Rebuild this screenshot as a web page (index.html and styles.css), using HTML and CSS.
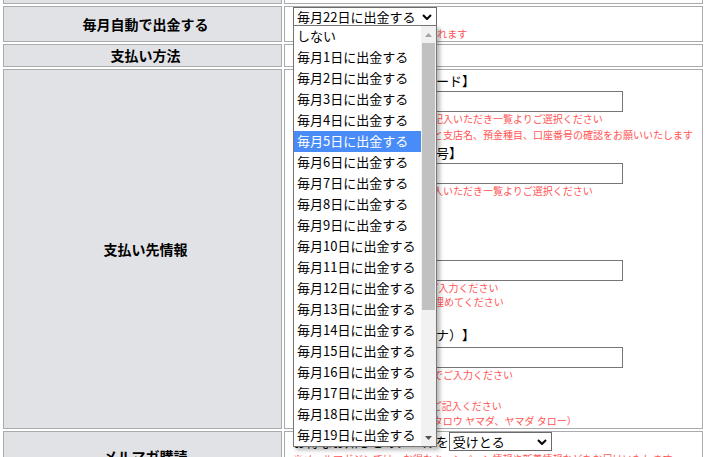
FILE: index.html
```html
<!DOCTYPE html>
<html lang="ja">
<head>
<meta charset="utf-8">
<title>出金設定</title>
<link rel="stylesheet" href="styles.css">
</head>
<body>
<table class="form">
  <tr class="r0">
    <th><div class="stub"></div></th>
    <td><div class="stub"></div></td>
  </tr>
  <tr>
    <th>毎月自動で出金する</th>
    <td>
      <div class="sel-wrap">
        <div class="select sel-day">
          <span class="sel-text">毎月22日に出金する</span>
          <svg class="chev" width="10" height="6" viewBox="0 0 10 6"><path d="M1 1 L5 5 L9 1" fill="none" stroke="#000" stroke-width="2"/></svg>
        </div>
        <div class="listbox">
          <div class="opts">
            <div class="opt">しない</div>
            <div class="opt">毎月1日に出金する</div>
            <div class="opt">毎月2日に出金する</div>
            <div class="opt">毎月3日に出金する</div>
            <div class="opt">毎月4日に出金する</div>
            <div class="opt sel">毎月5日に出金する</div>
            <div class="opt">毎月6日に出金する</div>
            <div class="opt">毎月7日に出金する</div>
            <div class="opt">毎月8日に出金する</div>
            <div class="opt">毎月9日に出金する</div>
            <div class="opt">毎月10日に出金する</div>
            <div class="opt">毎月11日に出金する</div>
            <div class="opt">毎月12日に出金する</div>
            <div class="opt">毎月13日に出金する</div>
            <div class="opt">毎月14日に出金する</div>
            <div class="opt">毎月15日に出金する</div>
            <div class="opt">毎月16日に出金する</div>
            <div class="opt">毎月17日に出金する</div>
            <div class="opt">毎月18日に出金する</div>
            <div class="opt">毎月19日に出金する</div>
          </div>
          <div class="sbar">
            <div class="sb-btn"><svg width="7" height="4" viewBox="0 0 7 4"><path d="M0 4 L3.5 0 L7 4 Z" fill="#a3a3a3"/></svg></div>
            <div class="sb-track"><div class="sb-thumb"></div></div>
            <div class="sb-btn"><svg width="7" height="4" viewBox="0 0 7 4"><path d="M0 0 L7 0 L3.5 4 Z" fill="#505050"/></svg></div>
          </div>
        </div>
      </div>
      <p class="note n-15">*指定日に自動で出金申請が行われます</p>
    </td>
  </tr>
  <tr>
    <th>支払い方法</th>
    <td><div class="lbl">銀行振込</div></td>
  </tr>
  <tr>
    <th>支払い先情報</th>
    <td>
      <div class="lbl">【お振込先の金融機関コード】</div>
      <input class="field" type="text">
      <p class="note">※金融機関名の一部をカナでご記入いただき一覧よりご選択ください</p>
      <p class="note mt2">入力後に表示された金融機関名と支店名、預金種目、口座番号の確認をお願いいたします</p>
      <div class="lbl">【振込先の支店コード番号】</div>
      <input class="field" type="text">
      <p class="note">※支店名の頭文字をカナでご記入いただき一覧よりご選択ください</p>
      <div class="lbl">【預金種目】</div>
      <div class="lbl radios">普通預金 / 当座預金</div>
      <div class="lbl">【口座番号】</div>
      <input class="field" type="text">
      <p class="note">※口座番号は7桁の半角数字でご入力ください</p>
      <p class="note">※7桁未満の場合は、先頭を0で埋めてください</p>
      <div class="lbl mt15">【振込先の口座名義（カナ）】</div>
      <input class="field mt2" type="text">
      <p class="note">※口座名義人名を全角カタカナでご入力ください</p>
      <p class="note n-15 mt16">※姓と名の間にスペースを入れご記入ください</p>
      <p class="note n-15">（誤った例：ヤマダ・タロウ、タロウ ヤマダ、ヤマダ タロー）</p>
    </td>
  </tr>
  <tr>
    <th>メルマガ購読</th>
    <td>
      <div class="mail-line">
        <span>お得なお知らせのメールを</span>
        <div class="select sel-mail">
          <span class="sel-text">受けとる</span>
          <svg class="chev" width="10" height="6" viewBox="0 0 10 6"><path d="M1 1 L5 5 L9 1" fill="none" stroke="#000" stroke-width="2"/></svg>
        </div>
      </div>
      <p class="note n-15">※メールマガジンでは、お得なキャンペーン情報や新着情報などをお届けいたします。</p>
      <p class="note n-15">※配信はいつでも停止できます。</p>
    </td>
  </tr>
</table>
</body>
</html>
```

FILE: styles.css
```css
html, body {
  margin: 0;
  padding: 0;
  overflow: hidden;
  background: #fff;
}

body {
  font-family: "Noto Sans CJK JP", "Noto Sans", sans-serif;
  font-size: 13px;
  color: #000;
  text-spacing-trim: space-all;
}

.form {
  border-collapse: separate;
  border-spacing: 2px;
  margin: -20px 0 0 1px;
  width: 704px;
}

.form th {
  width: 271px;
  padding: 0 0 0 6px;
  border: 1px solid #aaabad;
  background: #e1e2e6;
  font-size: 14px;
  font-weight: 700;
  line-height: 21px;
  text-align: center;
  vertical-align: middle;
}

.form td {
  padding: 0 8px;
  border: 1px solid #aaabad;
  background: #fff;
  vertical-align: top;
  text-align: left;
}

.stub {
  height: 20px;
}

/* closed select */
.sel-wrap {
  position: relative;
  width: 144px;
  height: 19px;
}

.select {
  box-sizing: border-box;
  display: flex;
  align-items: center;
  height: 19px;
  padding: 0 4px 0 3px;
  border: 1px solid #6b6b6b;
  background: #fff;
  font-size: 13px;
  line-height: 17px;
  white-space: nowrap;
}

.sel-day {
  width: 144px;
}

.sel-mail {
  width: 103px;
}

.sel-text {
  flex: 1;
}

.chev {
  display: block;
  flex: none;
}

/* open dropdown list */
.listbox {
  position: absolute;
  top: 18px;
  left: 0;
  z-index: 10;
  box-sizing: border-box;
  width: 144px;
  height: 422px;
  display: flex;
  border: 1px solid #767676;
  background: #fff;
  box-shadow: 3px 3px 4px rgba(0, 0, 0, 0.28);
}

.opts {
  width: 127px;
  overflow: hidden;
}

.opt {
  height: 21px;
  padding-left: 3px;
  font-size: 13px;
  line-height: 20px;
  white-space: nowrap;
  color: #000;
}

.opt.sel {
  background: #4a8cf7;
  color: #fff;
}

.sbar {
  width: 15px;
  display: flex;
  flex-direction: column;
  background: #f1f1f1;
}

.sb-btn {
  height: 17px;
  display: flex;
  align-items: center;
  justify-content: center;
}

.sb-btn svg {
  display: block;
}

.sb-track {
  flex: 1;
  padding: 0 1px;
}

.sb-thumb {
  height: 267px;
  background: #c1c1c1;
}

/* content */
.note {
  margin: 0;
  color: #ff5454;
  font-size: 10px;
  line-height: 14px;
  white-space: nowrap;
}

.n-15 {
  line-height: 15px;
}

.lbl {
  font-size: 13px;
  line-height: 21px;
  white-space: nowrap;
}

.radios {
  line-height: 20px;
}

.field {
  display: block;
  box-sizing: border-box;
  width: 330px;
  height: 21px;
  margin: 0;
  padding: 0 3px;
  border: 1px solid #767676;
  background: #fff;
  font: inherit;
}

.mt2 {
  margin-top: 2px;
}

.mt15 {
  margin-top: 15px;
}

.mt16 {
  margin-top: 16px;
}

.mail-line {
  display: flex;
  align-items: center;
  height: 19px;
  font-size: 13px;
  white-space: nowrap;
}
```
